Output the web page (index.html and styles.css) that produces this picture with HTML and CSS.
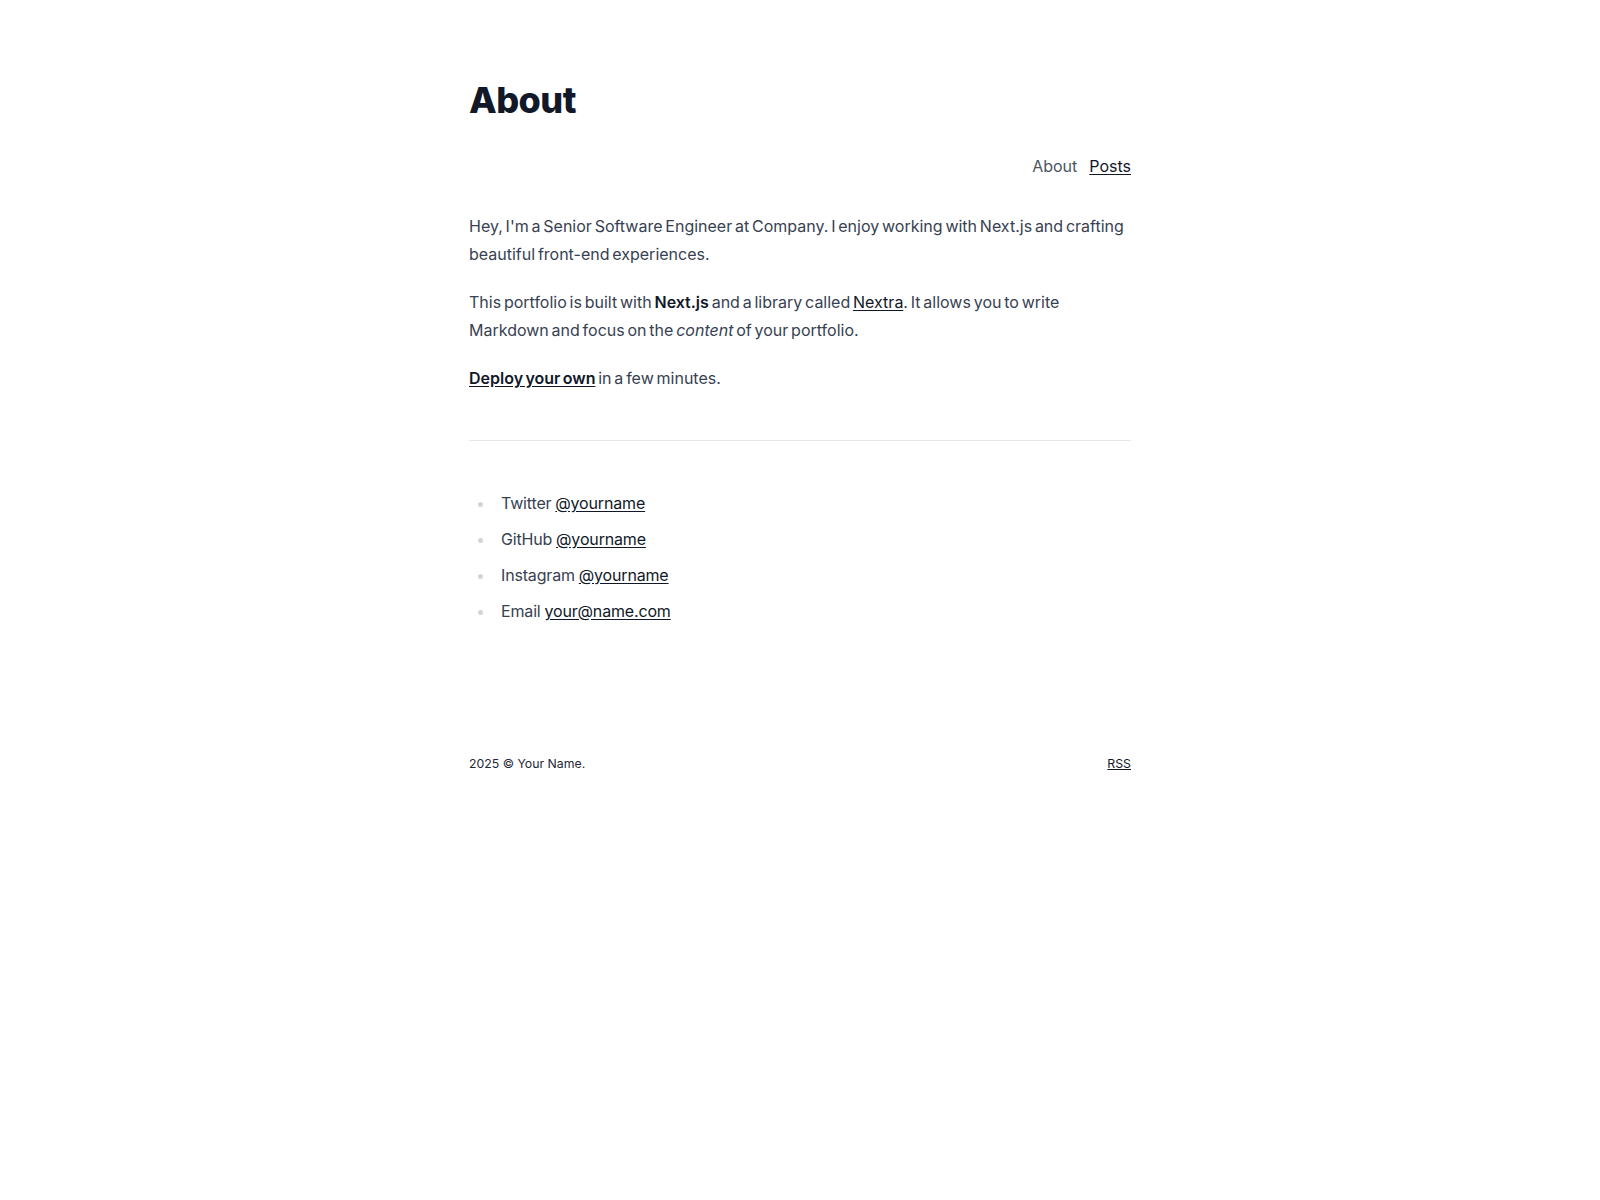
FILE: index.html
```html
<!DOCTYPE html>
<html lang="en">
<head>
<meta charset="utf-8">
<title>About</title>
<link rel="stylesheet" href="styles.css">
</head>
<body>
<div class="page">
  <h1 class="title">About</h1>
  <nav class="nav">
    <a class="nav-link" href="#">About</a>
    <a class="nav-link nav-link-active" href="#">Posts</a>
  </nav>
  <article class="prose">
    <p>Hey, I'm a Senior Software Engineer at Company. I enjoy working with Next.js and crafting beautiful front-end experiences.</p>
    <p>This portfolio is built with <strong>Next.js</strong> and a library called <a href="#">Nextra</a>. It allows you to write Markdown and focus on the <em>content</em> of your portfolio.</p>
    <p><a href="#"><strong>Deploy your own</strong></a> in a few minutes.</p>
    <hr>
    <ul>
      <li>Twitter <a href="#">@yourname</a></li>
      <li>GitHub <a href="#">@yourname</a></li>
      <li>Instagram <a href="#">@yourname</a></li>
      <li>Email <a href="#">your@name.com</a></li>
    </ul>
  </article>
  <footer class="footer">
    <span>2025 © Your Name.</span>
    <a class="footer-link" href="#">RSS</a>
  </footer>
</div>
</body>
</html>
```

FILE: styles.css
```css
html, body {
  margin: 0;
  padding: 0;
  background: #ffffff;
}

body {
  font-family: Inter, "Noto Sans", "Liberation Sans", sans-serif;
  color: #374151;
  font-size: 16px;
}

.page {
  width: 662px;
  margin: 0 auto;
  padding-top: 80px;
}

.title {
  margin: 0;
  font-size: 36px;
  line-height: 40px;
  font-weight: 800;
  color: #111827;
  letter-spacing: -0.015em;
}

.nav {
  display: flex;
  justify-content: flex-end;
  gap: 12px;
  margin-top: 34px;
  line-height: 24px;
  font-size: 16px;
}

.nav-link {
  color: #4b5563;
  text-decoration: none;
}

.nav-link-active {
  color: #111827;
  text-decoration: underline;
  text-underline-offset: 2px;
}

.prose {
  margin-top: 34px;
  font-size: 16px;
  line-height: 28px;
  color: #374151;
  word-spacing: -1.7px;
}

.prose p {
  margin: 0 0 20px;
}

.prose strong {
  color: #111827;
  font-weight: 600;
}

.prose a {
  color: #111827;
  font-weight: 400;
  text-decoration: underline;
  text-underline-offset: 2px;
}

.prose hr {
  border: 0;
  border-top: 1px solid #e5e7eb;
  margin: 48px 0;
}

.prose ul {
  margin: 48px 0 0;
  padding-left: 26px;
  list-style: disc;
  word-spacing: -0.5px;
  letter-spacing: -0.01em;
}

.prose li {
  margin: 8px 0;
  padding-left: 6px;
}

.prose li::marker {
  color: #d1d5db;
}

.footer {
  display: flex;
  justify-content: space-between;
  margin-top: 131px;
  font-size: 12.3px;
  line-height: 16px;
  color: #1f2937;
}

.footer-link {
  color: #111827;
  text-decoration: underline;
}
```
